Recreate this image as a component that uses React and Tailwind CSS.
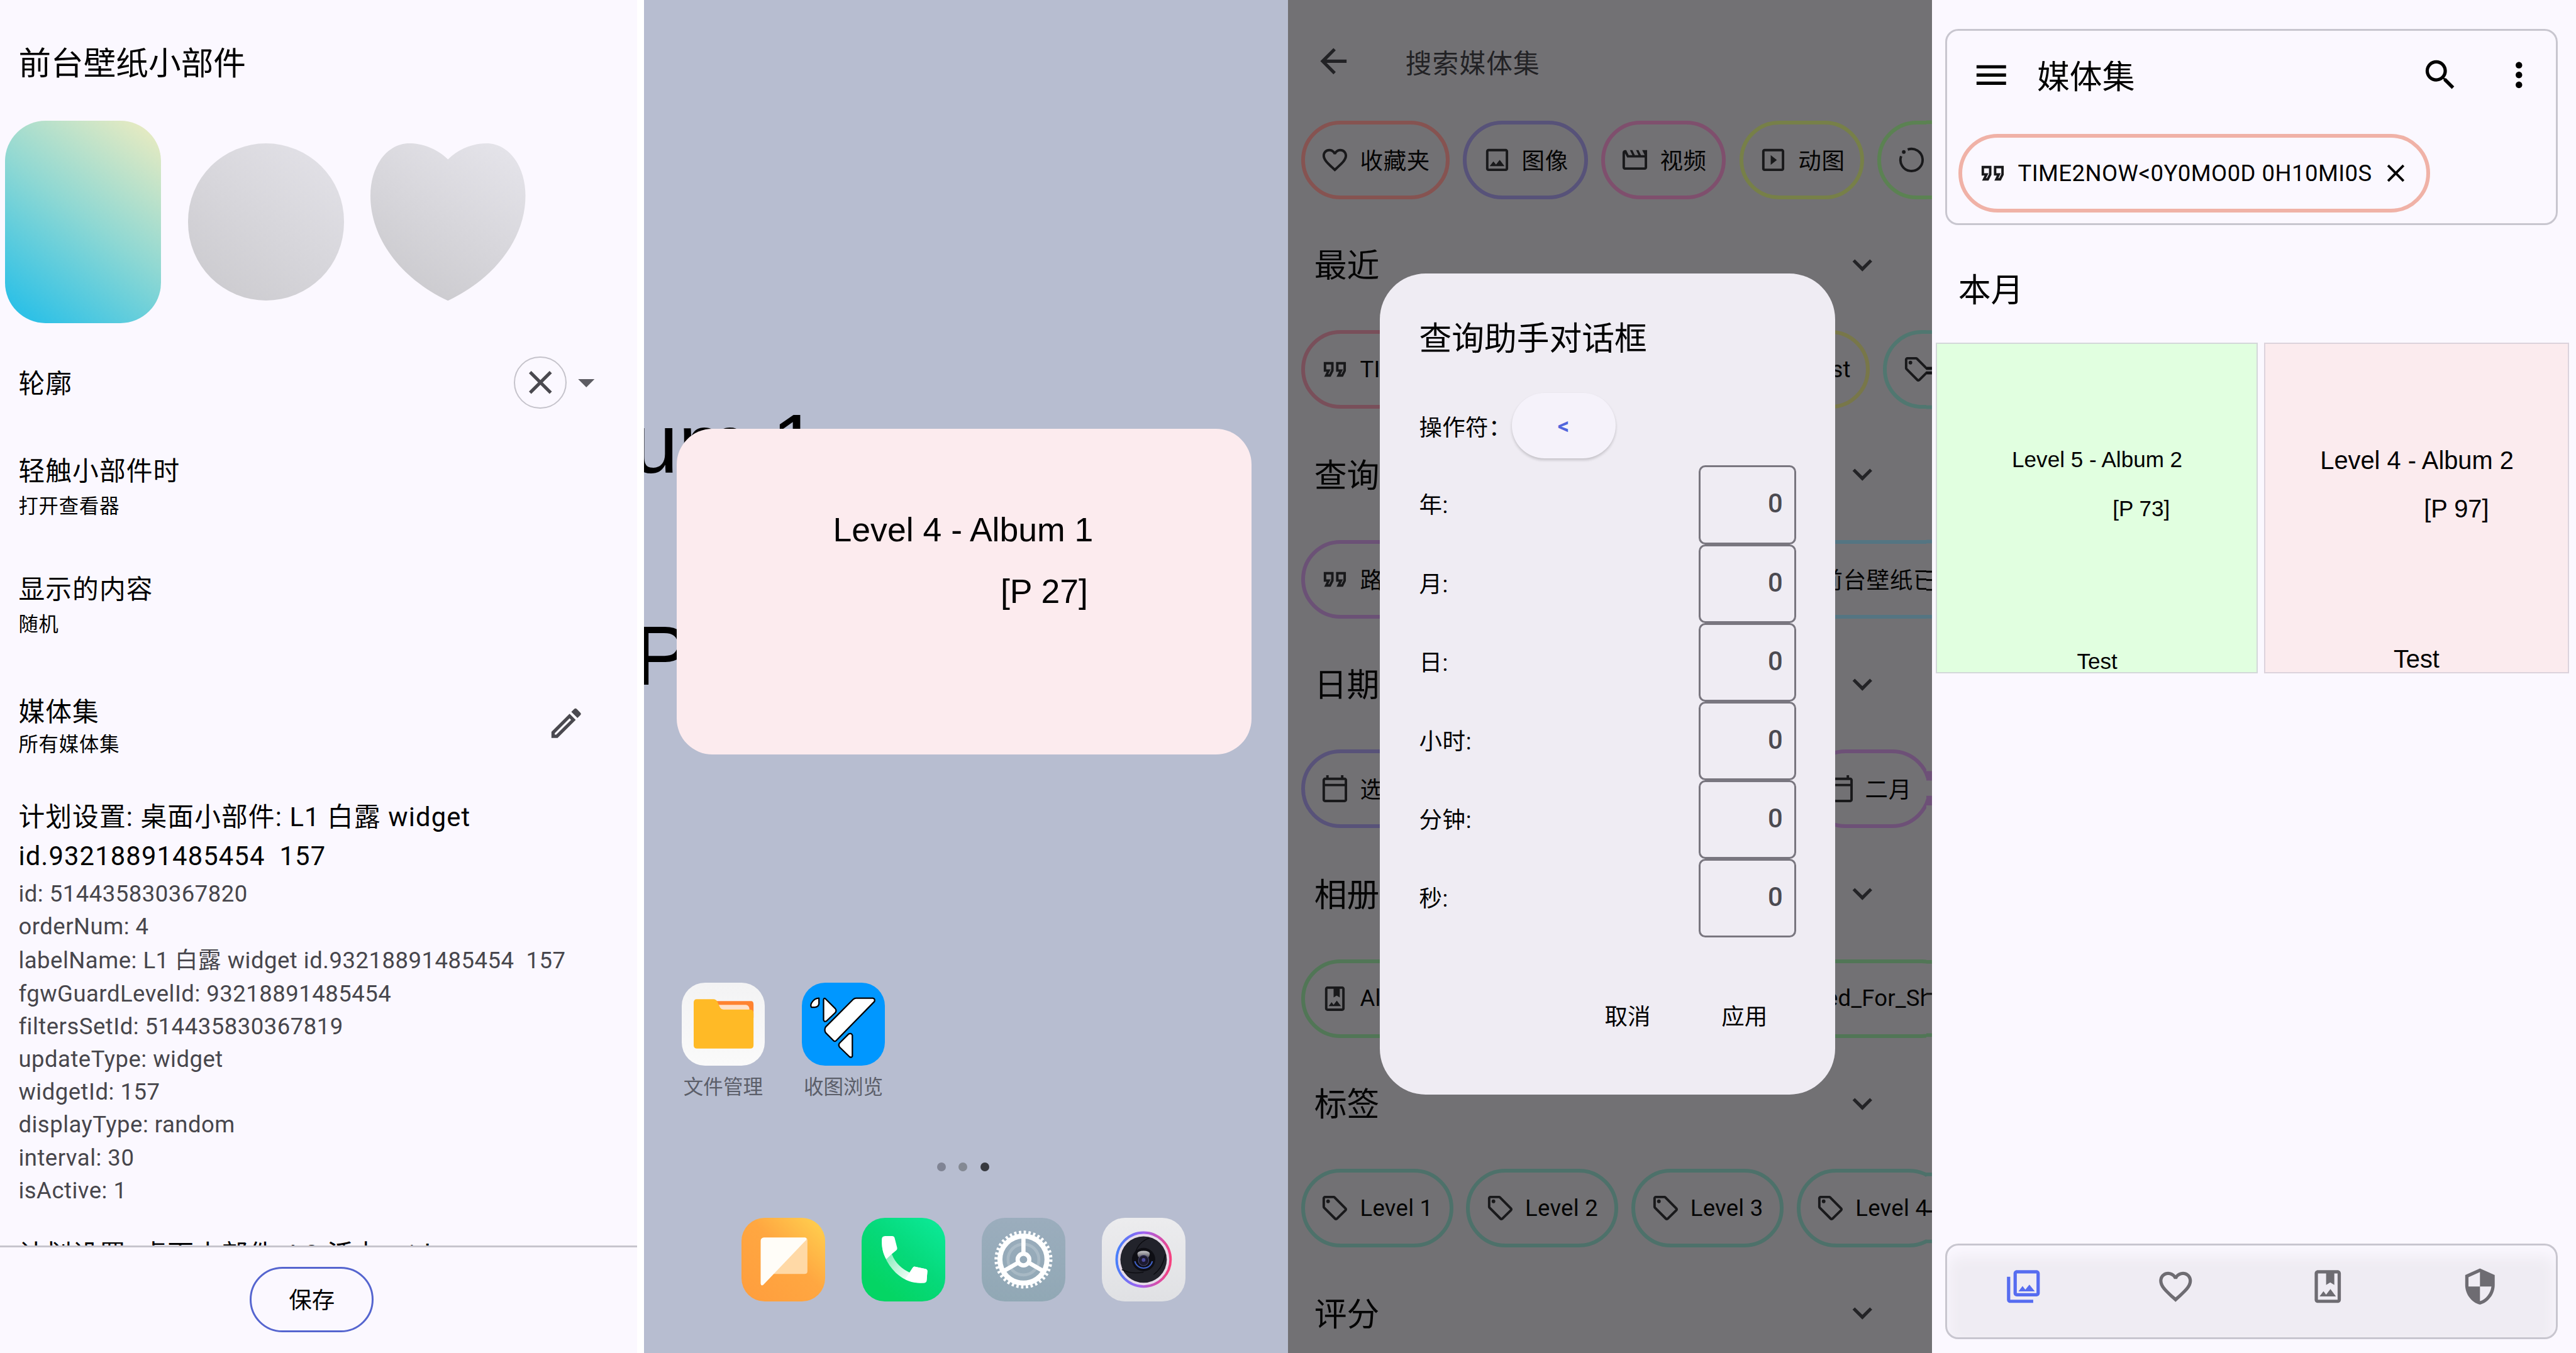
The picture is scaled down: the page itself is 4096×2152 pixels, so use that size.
import {
  MdArrowBack,
  MdArrowDropDown,
  MdClose,
  MdExpandMore,
  MdMenu,
  MdMoreVert,
  MdOutlineCalendarToday,
  MdOutlineEdit,
  MdOutlineFavoriteBorder,
  MdOutlineFormatQuote,
  MdOutlineImage,
  MdOutlineLocalOffer,
  MdOutlineMovie,
  MdOutlinePhotoAlbum,
  MdOutlinePhotoLibrary,
  MdOutlineSlideshow,
  MdSearch,
  MdSecurity,
} from "react-icons/md";

/* ---------- widget settings ---------- */

const details = [
  "id: 514435830367820",
  "orderNum: 4",
  "labelName: L1 白露 widget id.93218891485454  157",
  "fgwGuardLevelId: 93218891485454",
  "filtersSetId: 514435830367819",
  "updateType: widget",
  "widgetId: 157",
  "displayType: random",
  "interval: 30",
  "isActive: 1",
];

function Setting({ title, value, valueClass, className }) {
  return (
    <div className={className}>
      <div className="text-[44px] leading-[66px] tracking-[1.2px]">{title}</div>
      <div className={`text-[33px] tracking-[1px] ${valueClass}`}>{value}</div>
    </div>
  );
}

function WidgetSettings() {
  return (
    <section className="flex w-[1080px] shrink-0 bg-white">
      <div className="flex w-[1068px] flex-col bg-[#fbf8ff] text-black">
        <div className="h-[2089px] overflow-hidden">
          <h1 className="h-[202px] pt-[75px] pl-[31px] text-[54.5px] leading-[66px]">前台壁纸小部件</h1>
          <div className="flex h-[340px] items-center gap-[44.5px] pl-[8.5px]">
            <div className="h-[340px] w-[262px] rounded-[68px] bg-[linear-gradient(37deg,#2fc1e6_8%,#8fd8d3_52%,#e4eac2_94%)]" />
            <div className="h-[264px] w-[262px] rounded-full bg-[linear-gradient(37deg,#cac9cd,#e4e3e9)]" />
            <svg className="h-[264px] w-[260px]" viewBox="0 0 262 264" preserveAspectRatio="none">
              <defs>
                <linearGradient id="heart" x1="0.2" y1="1" x2="0.8" y2="0">
                  <stop offset="0" stopColor="#cac9cd" />
                  <stop offset="1" stopColor="#e4e3e9" />
                </linearGradient>
              </defs>
              <path
                d="M131 27C112 8 86 0 66 0C28 0 0 38 0 88C0 158 50 226 131 264C212 226 262 158 262 88C262 38 234 0 196 0C176 0 150 8 131 27Z"
                fill="url(#heart)"
              />
            </svg>
          </div>
          <div className="flex h-[200px] items-center pr-[52px] pl-[31px]">
            <div className="pt-[5px] text-[44px] leading-[66px] tracking-[1.2px]">轮廓</div>
            <div className="ml-auto flex size-[88px] items-center justify-center rounded-full border-[2.2px] border-[#c5c3cb]">
              <MdClose className="size-[66px] text-[#4a494f]" />
            </div>
            <MdArrowDropDown className="size-[66px] text-[#5d5c63]" />
          </div>
          <Setting title="轻触小部件时" value="打开查看器" valueClass="leading-[52px]" className="pt-[16px] pl-[31px]" />
          <Setting title="显示的内容" value="随机" valueClass="leading-[50px]" className="pt-[81px] pl-[31px]" />
          <div className="mt-[89px] flex justify-between pr-[85px] pl-[31px]">
            <Setting title="媒体集" value="所有媒体集" valueClass="leading-[44px]" />
            <MdOutlineEdit className="mt-[18px] size-[66px] text-[#4a494f]" />
          </div>
          <div className="mt-[66px] pl-[31px] text-[44px] leading-[66px] tracking-[1.2px]">
            <div>计划设置: 桌面小部件: L1 白露 widget</div>
            <div className="whitespace-pre">id.93218891485454  157</div>
          </div>
          <ul className="mt-[2px] pl-[31px] text-[38.5px] tracking-[0.52px] text-[#47464c]">
            {details.map((line) => (
              <li key={line} className="leading-[55px] whitespace-pre nth-3:leading-[58px]">
                {line}
              </li>
            ))}
          </ul>
          <div className="mt-[48px] pl-[31px] text-[44px] leading-[66px] tracking-[1.2px]">
            计划设置: 桌面小部件: L2 活力 widget
          </div>
        </div>
        <div className="flex-1 border-t-[3.2px] border-[#c7c5cd] pt-[33px] pl-[419px]">
          <button className="h-[110px] w-[208px] rounded-full border-[3.2px] border-[#5565cf] pt-[5px] text-[38.5px] leading-[98px]">
            保存
          </button>
        </div>
      </div>
    </section>
  );
}

/* ---------- home screen ---------- */

function FilesIcon() {
  return (
    <svg viewBox="0 0 100 100" className="size-[140px] rounded-[39px] bg-linear-to-b from-[#f3f3f4] to-[#fafafa]">
      <path d="M38 22H83Q86 22 86 26V42H38Z" fill="#ff8330" />
      <path d="M42 26.5H77Q81 27 81 32V36H42Z" fill="#ffe1c8" />
      <path d="M18 19.7H38Q41 19.7 42.5 22.5L46 30Q47.5 32.3 50 32.3H82Q86 32.3 86 37V75Q86 79 82 79H18.5Q14.3 79 14.3 75V24Q14.3 19.7 18 19.7Z" fill="#ffba26" />
    </svg>
  );
}

function GalleryIcon() {
  return (
    <svg viewBox="0 0 100 100" className="size-[140px] rounded-[39px] bg-[#0097ff]">
      <g fill="#fff" stroke="#000" strokeWidth="1.7" strokeLinejoin="round">
        <path d="M65 18.5H85Q88 19 87 22.5L41 69.5Q39.4 71 38 69.5L28.5 60Q26.5 56.5 28.5 53L61.5 20Q63 18.5 65 18.5Z" />
        <path d="M28 19L40 31Q42 33.5 40 36L29.5 46Q26.5 47.5 26 44.5V20.5Q26.2 18 28 19Z" />
        <path d="M20.5 18.6V25.5Q19.5 29.6 15 29.4H11.5Q10 27.5 11.5 24.5Q15 18.5 20.5 18.6Z" />
        <path d="M60.5 63V88Q59.5 90.5 57 88.7L45 77Q43.4 74.5 45 72.5L56 61.5Q59.5 60 60.5 63Z" />
      </g>
    </svg>
  );
}

function NotesIcon() {
  return (
    <svg viewBox="0 0 100 100" className="size-[140px] rounded-[39px] bg-[linear-gradient(45deg,#ff9f3e_10%,#ffa741_55%,#ffd350_100%)]">
      <path d="M76 24Q79 24 79 27V64Q79 67.3 75.5 67.3H38Z" fill="#ffd9a6" />
      <path d="M27 23.6H76Q79 24 77.5 26.5L26 80.5Q23.3 82 23 79V27.5Q23.2 23.8 27 23.6Z" fill="#fffdf8" />
    </svg>
  );
}

function PhoneIcon() {
  return (
    <svg viewBox="0 0 100 100" className="size-[140px] rounded-[39px] bg-[linear-gradient(40deg,#04d564_20%,#06d97a_55%,#0ceb9b_100%)]">
      <defs>
        <linearGradient id="call" x1="0.1" y1="0.4" x2="0.7" y2="0.85">
          <stop offset="0" stopColor="#fff" stopOpacity="0.55" />
          <stop offset="1" stopColor="#fff" />
        </linearGradient>
      </defs>
      <path d="M24.2 29C24 40 29 54 41 66C53 77 64 78.5 74 78Q78 78 78 74L78.8 64Q78.8 62 76.5 61.3L64 58.5Q62 58.3 61 60L57.5 65.5C49 61.5 40 54 36.5 44Z" fill="url(#call)" />
      <path d="M28 21.8H36.5Q39 21.8 39.5 24L42.6 36Q43 38 41.5 39L36 43.5L29.5 49.5C25 42 24 34 24.2 25.5Q24.5 22 28 21.8Z" fill="#fff" />
      <path d="M57.5 65.5L61 60Q62 58.3 64 58.5L76.5 61.3Q78.8 62 78.8 64L78 74Q78 78 74 78C67 78.3 59 77 52 73.5Z" fill="#fff" />
    </svg>
  );
}

function SettingsIcon() {
  return (
    <svg viewBox="0 0 100 100" className="size-[140px] rounded-[39px] bg-[linear-gradient(180deg,#9badbd,#91a8b5)]">
      <g fill="none" stroke="#fff">
        <circle cx="50" cy="50" r="18.5" strokeWidth="3.5" opacity="0.18" />
        <circle cx="50" cy="50" r="32.7" strokeWidth="4" strokeDasharray="2.8 2.907" />
        <circle cx="50" cy="50" r="28.2" strokeWidth="6" />
        <circle cx="50" cy="50" r="7" strokeWidth="5" />
        <path d="M50 43V23M44 53.5L26 64M56 53.5L74 64" strokeWidth="5" />
      </g>
    </svg>
  );
}

function CameraIcon() {
  return (
    <svg viewBox="0 0 100 100" className="size-[140px] rounded-[39px] bg-linear-to-b from-[#ececee] to-[#e0e1e4]">
      <defs>
        <linearGradient id="ring" x1="0" y1="0.6" x2="1" y2="0.7">
          <stop offset="0" stopColor="#4a7ffa" />
          <stop offset="0.45" stopColor="#a062f0" />
          <stop offset="1" stopColor="#f8407c" />
        </linearGradient>
        <linearGradient id="lens" x1="0" y1="0" x2="0" y2="1">
          <stop offset="0" stopColor="#c9c9cc" />
          <stop offset="1" stopColor="#3c3a44" />
        </linearGradient>
      </defs>
      <circle cx="50" cy="50" r="32.3" fill="#e6dce8" stroke="url(#ring)" strokeWidth="3" />
      <circle cx="50" cy="50" r="27.8" fill="#22232b" />
      <path d="M57 24Q44 29 40 42M76 44Q73 60 62 68M24 62Q36 68 50 65" fill="none" stroke="#0b0b10" strokeWidth="1" />
      <circle cx="50" cy="50" r="14" fill="#0e0e14" />
      <path d="M42.5 43Q43 39.5 50 39.5Q57 39.5 57.5 43Q57 49.5 50 49.5Q43 49.5 42.5 43Z" fill="url(#lens)" />
      <path d="M39.5 52A10.8 10.8 0 0 0 60.5 52" fill="none" stroke="#3f5fc4" strokeWidth="1.5" />
      <circle cx="50" cy="51" r="6.2" fill="#1c1a30" stroke="#4a4a72" strokeWidth="0.8" />
      <circle cx="50" cy="50.5" r="2.2" fill="#4b4a9c" />
    </svg>
  );
}

function HomeScreen() {
  return (
    <section className="relative flex w-[1080px] shrink-0 flex-col overflow-hidden bg-[#b7bdd0]">
      <div className="absolute top-[664px] left-[-21px] font-[Liberation_Sans,Arial,sans-serif] text-[141px] leading-[160px] text-black">
        <div>um 1</div>
        <div className="mt-[196px] pl-[4px]">P</div>
      </div>
      <div className="relative mt-[719px] ml-[55px] h-[547px] w-[964px] rounded-[60px] bg-[#fcebee] pt-[138px] font-[Liberation_Sans,Arial,sans-serif] text-[56.5px] leading-[64px] text-black">
        <div className="pl-[262px]">Level 4 - Album 1</div>
        <div className="mt-[40px] pl-[543px]">[P 27]</div>
      </div>
      <div className="mt-[382px] flex pl-[32px]">
        <div className="flex w-[201.6px] flex-col items-center">
          <FilesIcon />
          <span className="mt-[14px] text-[33.3px] leading-[44px] text-[#5b5e69]">文件管理</span>
        </div>
        <div className="flex w-[201.6px] flex-col items-center">
          <GalleryIcon />
          <span className="mt-[14px] text-[33.3px] leading-[44px] text-[#5b5e69]">收图浏览</span>
        </div>
      </div>
      <div className="mt-[104px] flex gap-[21.5px] pl-[491px]">
        <i className="size-[15px] rounded-full bg-[#808494]" />
        <i className="size-[15px] rounded-full bg-[#848993]" />
        <i className="size-[15px] rounded-full bg-[#37393f]" />
      </div>
      <div className="mt-[78px] ml-[133px] flex w-[806px] justify-around">
        <NotesIcon />
        <PhoneIcon />
        <SettingsIcon />
        <CameraIcon />
      </div>
    </section>
  );
}

/* ---------- search page with query dialog ---------- */

function MotionIcon({ className }) {
  return (
    <svg viewBox="0 0 24 24" className={className} fill="none" stroke="currentColor" strokeWidth="2">
      <path d="M8.9 3.54A9 9 0 1 1 3.54 8.9" />
      <circle cx="5.7" cy="5.5" r="1.5" fill="currentColor" stroke="none" />
    </svg>
  );
}

function Chip({ icon: Icon, color, className = "", latin = false, children }) {
  return (
    <div className={`flex h-[132px] shrink-0 items-center rounded-full border-[6.4px] px-[26px] ${color} ${className}`}>
      <Icon className="size-[49.5px] shrink-0 text-[#19191b]" />
      <span
        className={`pl-[17px] text-[38.5px] leading-[55px] whitespace-nowrap ${latin ? "tracking-[0.28px]" : "pt-[6px] tracking-[0.7px]"}`}
      >
        {children}
      </span>
    </div>
  );
}

function Section({ title, children }) {
  return (
    <div>
      <div className="flex h-[219.8px] items-center justify-between pr-[75px] pl-[44px]">
        <h2 className="pt-[8px] text-[54.7px] leading-[66px]">{title}</h2>
        <MdExpandMore className="size-[66px] text-[#232326]" />
      </div>
      <div className="flex h-[132px] gap-[22px] pl-[22px]">{children}</div>
    </div>
  );
}

function SearchPage() {
  return (
    <section className="relative w-[1080px] shrink-0 overflow-hidden bg-[#727174] text-[#050505]">
      <div className="h-full w-[1071px] overflow-hidden">
        <div className="flex h-[202px] items-start pt-[70px] pl-[43px] text-[#222225]">
          <MdArrowBack className="size-[66px]" />
          <span className="pt-[5px] pl-[88px] text-[44px] leading-[66px] tracking-[1.2px]">搜索媒体集</span>
        </div>
        <div className="flex h-[132px] gap-[22.4px] pl-[22px]">
          <Chip icon={MdOutlineFavoriteBorder} color="border-[#865351]">收藏夹</Chip>
          <Chip icon={MdOutlineImage} color="border-[#575279]">图像</Chip>
          <Chip icon={MdOutlineMovie} color="border-[#7f4f6d]">视频</Chip>
          <Chip icon={MdOutlineSlideshow} color="border-[#778048]">动图</Chip>
          <Chip icon={MotionIcon} color="border-[#5b8252]" className="w-[300px]">动态</Chip>
        </div>
        <Section title="最近">
          <div className="flex w-[954px] shrink-0 gap-[22px]">
            <Chip latin icon={MdOutlineFormatQuote} color="border-[#794f5a]" className="flex-1">TIME2NOW</Chip>
            <Chip latin icon={MdOutlineLocalOffer} color="border-[#787749]">Test</Chip>
          </div>
          <Chip latin icon={MdOutlineLocalOffer} color="border-[#507770]" className="w-[300px]">Test</Chip>
        </Section>
        <Section title="查询">
          <Chip icon={MdOutlineFormatQuote} color="border-[#6b5176]" className="w-[749px]">路径</Chip>
          <Chip icon={MdOutlineFormatQuote} color="border-[#547582]" className="w-[500px]">前台壁纸已</Chip>
        </Section>
        <Section title="日期">
          <Chip icon={MdOutlineCalendarToday} color="border-[#585279]" className="w-[825px]">选择</Chip>
          <Chip icon={MdOutlineCalendarToday} color="border-[#6d5077]">二月</Chip>
        </Section>
        <Section title="相册">
          <Chip latin icon={MdOutlinePhotoAlbum} color="border-[#517656]" className="w-[759px]">Album</Chip>
          <Chip latin icon={MdOutlinePhotoAlbum} color="border-[#517656]" className="w-[326px]">ed_For_Sh</Chip>
        </Section>
        <Section title="标签">
          <Chip latin icon={MdOutlineLocalOffer} color="border-[#4d716a]" className="w-[255px]">Level 1</Chip>
          <Chip latin icon={MdOutlineLocalOffer} color="border-[#4d716a]" className="w-[255px]">Level 2</Chip>
          <Chip latin icon={MdOutlineLocalOffer} color="border-[#4d716a]" className="w-[255px]">Level 3</Chip>
          <Chip latin icon={MdOutlineLocalOffer} color="border-[#4d716a]" className="w-[255px]">Level 4</Chip>
        </Section>
        <Section title="评分" />
      </div>

      {/* scroll edge: the last column of the rows is stretched sideways */}
      <svg className="absolute top-0 right-0 h-[2270px] w-[9px]" viewBox="0 0 9 2270" preserveAspectRatio="none">
        <path d="M0 202h10v6H0zM0 328h10v6H0z" fill="#5b8252" />
        <path d="M0 554h10v6H0zM0 680h10v6H0z" fill="#507770" />
        <path d="M0 615.5h10v5H0zM0 623h10v5H0z" fill="#121214" />
        <path d="M0 905.5h10v6H0zM0 1031.5h10v6H0z" fill="#547582" />
        <path d="M0 957.5h10v3H0zM0 971.5h10v3H0zM0 988h10v3H0z" fill="#050505" />
        <path d="M0 1293.5h10v16H0zM0 1335h10v16H0z" fill="#6d5077" />
        <path d="M0 1610.5h10v6H0zM0 1733.5h10v6H0z" fill="#517656" />
        <path d="M0 1665.5h10v3.5H0z" fill="#151515" />
        <path d="M0 1967h10v6H0zM0 2079.5h10v6H0z" fill="#4d716a" />
        <path d="M0 2030.5h10v3.5H0z" fill="#050505" />
      </svg>

      <QueryDialog />
    </section>
  );
}

function QueryDialog() {
  return (
    <div className="absolute top-[459px] left-[154px] flex h-[1377px] w-[764px] flex-col rounded-[77px] bg-[#efecf3] px-[66px] text-black">
      <h2 className="pt-[78px] text-[54.6px] leading-[66px]">查询助手对话框</h2>
      <div className="mt-[56px] flex h-[110px] items-center">
        <span className="pt-[8px] text-[38.5px] leading-[55px] tracking-[0.28px]">操作符：</span>
        <button className="h-[110px] w-[174px] rounded-full bg-[#f5f2fa] pt-[3px] text-[38.5px] font-semibold text-[#5166dc] shadow-[0_3px_5px_rgba(0,0,0,0.18)]">
          &lt;
        </button>
      </div>
      <div className="mt-[12px]">
        {["年:", "月:", "日:", "小时:", "分钟:", "秒:"].map((label) => (
          <label key={label} className="flex h-[132px] items-center justify-between">
            <span className="pt-[3px] text-[38.5px] leading-[55px] tracking-[0.6px]">{label}</span>
            <span className="h-[132px] w-[163px] rounded-[11px] border-[3.2px] border-[#79767f] pr-[19px] text-right text-[44px] leading-[122px] font-medium text-[#4b4a51]">
              0
            </span>
          </label>
        ))}
      </div>
      <div className="mt-[106px] flex justify-end gap-[119px] pr-[48px] text-[38.5px] leading-[55px]">
        <button>取消</button>
        <button>应用</button>
      </div>
    </div>
  );
}

/* ---------- collection page ---------- */

function CollectionPage() {
  return (
    <section className="flex w-[1080px] shrink-0 flex-col bg-[#fbf8ff] text-black">
      <div className="mt-[48px] ml-[22px] h-[330px] w-[1028px] rounded-[22px] border-[3.2px] border-[#c8c6cf]">
        <div className="flex h-[173px] items-start pt-[41px] pl-[41px]">
          <MdMenu className="mt-[1px] size-[66px]" />
          <h1 className="pt-[6px] pl-[44px] text-[54.7px] leading-[66px]">媒体集</h1>
          <MdSearch className="mt-[1px] ml-auto size-[66px]" />
          <MdMoreVert className="mt-[1px] mr-[29px] ml-[66px] size-[66px]" />
        </div>
        <div className="ml-[19px] flex h-[132px] w-[791px] items-center rounded-full border-[6.4px] border-[#f0b2a7] pl-[27px]">
          <MdOutlineFormatQuote className="size-[49.5px] text-[#19191b]" />
          <span className="pt-[2px] pl-[17px] text-[38.5px] leading-[55px] tracking-[0.48px]">TIME2NOW&lt;0Y0MO0D 0H10MI0S</span>
          <MdClose className="mr-[26px] ml-auto size-[49.5px]" />
        </div>
      </div>
      <h2 className="mt-[78px] pl-[44px] text-[54.7px] leading-[66px]">本月</h2>
      <div className="mt-[53px] flex gap-[11px] pl-[6px] font-[Liberation_Sans,Arial,sans-serif]">
        <div className="h-[555px] w-[540px] border-[2.2px] border-[#d3d8d9] bg-[#e1ffe0] pt-[173px] text-[37px] leading-[42px]">
          <div className="pl-[126px]">Level 5 - Album 2</div>
          <div className="pt-[40px] pl-[295px]">[P 73]</div>
          <div className="pt-[214px] pl-[235px]">Test</div>
        </div>
        <div className="h-[555px] w-[511px] border-[2.2px] border-[#dcd3dc] bg-[#fbebee] pt-[173px] text-[42px] leading-[46px]">
          <div className="pl-[92px]">Level 4 - Album 2</div>
          <div className="pt-[35px] pl-[266px]">[P 97]</div>
          <div className="pt-[206px] pl-[215px]">Test</div>
        </div>
      </div>
      <nav className="mt-auto mb-[24px] ml-[22px] flex h-[160px] w-[1028px] justify-around rounded-[22px] border-[3.2px] border-[#c8c6cf] bg-[#efecf3] pt-[36px] text-[#6e6c72] shadow-[inset_0_16px_26px_#fbf8ff]">
        <MdOutlinePhotoLibrary className="size-[66px] text-[#566cf0]" />
        <MdOutlineFavoriteBorder className="size-[66px]" />
        <MdOutlinePhotoAlbum className="size-[66px]" />
        <MdSecurity className="size-[66px]" />
      </nav>
    </section>
  );
}

export default function App() {
  return (
    <main lang="zh-CN" className="h-[2152px] w-[4096px] overflow-hidden">
      <div className="flex h-[2270px] w-[4320px] font-[Roboto,Noto_Sans_CJK_SC,sans-serif] [zoom:0.948148]">
        <WidgetSettings />
        <HomeScreen />
        <SearchPage />
        <CollectionPage />
      </div>
    </main>
  );
}
